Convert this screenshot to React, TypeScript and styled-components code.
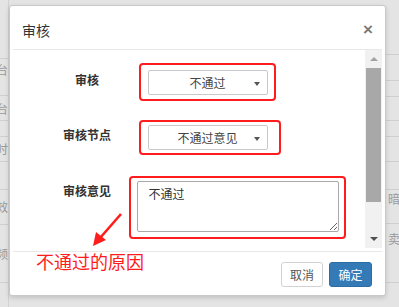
import React from "react";
import styled, { createGlobalStyle } from "styled-components";

const GlobalStyle = createGlobalStyle`
  html, body { margin: 0; padding: 0; }
  body {
    background: #e4e4e4;
    font-family: "Liberation Sans", "Noto Sans CJK SC", sans-serif;
  }
  * { box-sizing: border-box; }
`;

const Page = styled.div`
  position: relative;
  width: 399px;
  height: 307px;
  overflow: hidden;
  background: #e4e4e4;
  display: flex;
  justify-content: space-between;
`;

const BgColumn = styled.div<{ $side: "left" | "right" }>`
  width: ${(p) => (p.$side === "left" ? "9px" : "13px")};
  display: flex;
  flex-direction: column;
  overflow: hidden;
  border-right: ${(p) => (p.$side === "left" ? "1px solid #d2d2d2" : "none")};
`;

const BgCell = styled.div<{ $h: number; $side: "left" | "right"; $top: number }>`
  height: ${(p) => p.$h}px;
  flex: none;
  border-bottom: 1px solid #cfcfcf;
  display: flex;
  justify-content: ${(p) => (p.$side === "left" ? "flex-end" : "flex-start")};
  align-items: flex-start;
  padding-top: ${(p) => p.$top}px;
  padding-left: ${(p) => (p.$side === "right" ? "2px" : "0")};
  font-size: 12px;
  line-height: 14px;
  color: #9a9a9a;
  white-space: nowrap;
`;

const Modal = styled.div`
  position: absolute;
  left: 9px;
  top: 5px;
  width: 377px;
  height: 291px;
  background: #fff;
  border: 1px solid #c8c8c8;
  border-radius: 3px;
  box-shadow: 0 2px 5px rgba(0, 0, 0, 0.15);
  display: flex;
  flex-direction: column;
`;

const Header = styled.div`
  height: 44px;
  flex: none;
  margin: 0 3px;
  padding: 0 8px 0 9px;
  border-bottom: 1px solid #e8e8e8;
  display: flex;
  align-items: center;
  justify-content: space-between;
`;

const Title = styled.div`
  font-size: 14px;
  color: #333;
  font-family: "Noto Sans CJK SC", sans-serif;
  margin-top: 4px;
`;

const Close = styled.div`
  font-size: 17px;
  font-weight: bold;
  color: #7a7a7a;
  line-height: 1;
  margin-top: 3px;
  margin-right: 1px;
`;

const Body = styled.div`
  height: 198px;
  flex: none;
  margin: 0 3px;
  display: flex;
`;

const Content = styled.div`
  flex: 1;
  padding-top: 13px;
  display: flex;
  flex-direction: column;
`;

const FormRow = styled.div<{ $gap: number }>`
  display: grid;
  grid-template-columns: 116px 1fr;
  margin-bottom: ${(p) => p.$gap}px;
`;

const Label = styled.div<{ $top: number }>`
  padding-left: 32px;
  padding-top: ${(p) => p.$top}px;
  text-align: center;
  font-size: 12px;
  line-height: 16px;
  font-weight: bold;
  color: #333;
  font-family: "Noto Sans CJK SC", sans-serif;
`;

const RedBox = styled.div<{ $offset: number; $pad: string }>`
  justify-self: start;
  margin-left: ${(p) => p.$offset}px;
  padding: ${(p) => p.$pad};
  border: 2.5px solid #ff1c1c;
  border-radius: 4px;
  display: flex;
`;

const Select = styled.div`
  position: relative;
  width: 120px;
  height: 25px;
  border: 1px solid #c9c9c9;
  border-radius: 2px;
  background: #fff;
  font-size: 12px;
  color: #444;
  font-family: "Noto Sans CJK SC", sans-serif;
  display: flex;
  align-items: center;
  justify-content: center;
  &::after {
    content: "";
    position: absolute;
    right: 7px;
    top: 11px;
    border-left: 3px solid transparent;
    border-right: 3px solid transparent;
    border-top: 4px solid #555;
  }
`;

const TextArea = styled.textarea`
  width: 202px;
  height: 51px;
  border: 1px solid #a9a9a9;
  border-radius: 2px;
  padding: 4px 11px;
  font-size: 12px;
  line-height: 16px;
  color: #333;
  font-family: "Noto Sans CJK SC", sans-serif;
  resize: vertical;
  outline: none;
  display: block;
`;

const ScrollBar = styled.div`
  width: 17px;
  flex: none;
  background: #f1f1f1;
  display: flex;
  flex-direction: column;
  align-items: center;
`;

const ScrollArrow = styled.div<{ $dir: "up" | "down" }>`
  height: 18px;
  flex: none;
  width: 100%;
  display: flex;
  align-items: center;
  justify-content: center;
  &::before {
    content: "";
    border-left: 4px solid transparent;
    border-right: 4px solid transparent;
    ${(p) =>
      p.$dir === "up"
        ? "border-bottom: 4px solid #a3a3a3;"
        : "border-top: 4px solid #505050;"}
  }
`;

const Thumb = styled.div`
  width: 15px;
  height: 134px;
  background: #a8a8a8;
  flex: none;
`;

const Spacer = styled.div`
  flex: 1;
`;

const Footer = styled.div`
  flex: 1;
  margin: 3px 3px 0;
  border-top: 1px solid #e8e8e8;
  padding: 10px 10px 0;
  display: flex;
  justify-content: flex-end;
  align-items: flex-start;
  gap: 6px;
`;

const Button = styled.button<{ $primary?: boolean }>`
  height: 25px;
  width: ${(p) => (p.$primary ? "43px" : "42px")};
  padding: 0;
  border-radius: 3px;
  font-size: 12px;
  font-family: "Noto Sans CJK SC", sans-serif;
  border: 1px solid ${(p) => (p.$primary ? "#2e6da4" : "#d2d2d2")};
  background: ${(p) => (p.$primary ? "#337ab7" : "#fff")};
  color: ${(p) => (p.$primary ? "#fff" : "#555")};
`;

const Arrow = styled.svg`
  position: absolute;
  left: 0;
  top: 0;
  pointer-events: none;
`;

const Note = styled.div`
  position: absolute;
  left: 26px;
  top: 244px;
  font-size: 18px;
  line-height: 22px;
  color: #ff1c1c;
  font-family: "Noto Sans CJK SC", sans-serif;
  white-space: nowrap;
`;

const leftCells = [
  { h: 59, t: "" },
  { h: 37, t: "台", top: 5 },
  { h: 25, t: "台", top: 7 },
  { h: 16, t: "" },
  { h: 25, t: "时", top: 6 },
  { h: 28, t: "" },
  { h: 35, t: "效", top: 11 },
  { h: 58, t: "频", top: 23 },
  { h: 30, t: "" },
];

const rightCells = [
  { h: 55, t: "" },
  { h: 26, t: "" },
  { h: 16, t: "" },
  { h: 24, t: "" },
  { h: 16, t: "" },
  { h: 25, t: "" },
  { h: 28, t: "" },
  { h: 34, t: "暗", top: 3 },
  { h: 59, t: "卖", top: 9 },
  { h: 30, t: "" },
];

export default function App() {
  return (
    <>
      <GlobalStyle />
      <Page>
        <BgColumn $side="left">
          {leftCells.map((c, i) => (
            <BgCell key={i} $h={c.h} $side="left" $top={c.top ?? 0}>
              {c.t}
            </BgCell>
          ))}
        </BgColumn>
        <BgColumn $side="right">
          {rightCells.map((c, i) => (
            <BgCell key={i} $h={c.h} $side="right" $top={c.top ?? 0}>
              {c.t}
            </BgCell>
          ))}
        </BgColumn>

        <Modal>
          <Header>
            <Title>审核</Title>
            <Close>×</Close>
          </Header>
          <Body>
            <Content>
              <FormRow $gap={19}>
                <Label $top={9}>审核</Label>
                <RedBox $offset={10} $pad="4.5px 6.5px">
                  <Select>不通过</Select>
                </RedBox>
              </FormRow>
              <FormRow $gap={21}>
                <Label $top={7}>审核节点</Label>
                <RedBox $offset={10} $pad="2.5px 11.5px 3.5px 6.5px">
                  <Select>不通过意见</Select>
                </RedBox>
              </FormRow>
              <FormRow $gap={0}>
                <Label $top={7}>审核意见</Label>
                <RedBox $offset={0} $pad="2.5px 5.5px 5.5px 5.5px">
                  <TextArea readOnly defaultValue="不通过" />
                </RedBox>
              </FormRow>
            </Content>
            <ScrollBar>
              <ScrollArrow $dir="up" />
              <Thumb />
              <Spacer />
              <ScrollArrow $dir="down" />
            </ScrollBar>
          </Body>
          <Footer>
            <Button>取消</Button>
            <Button $primary>确定</Button>
          </Footer>
          <Arrow width="377" height="291" viewBox="0 0 377 291">
            <line x1="111" y1="208" x2="90" y2="232" stroke="#ff1c1c" strokeWidth="2.5" />
            <polygon points="83,240 86,226 96,234" fill="#ff1c1c" />
          </Arrow>
          <Note>不通过的原因</Note>
        </Modal>
      </Page>
    </>
  );
}
